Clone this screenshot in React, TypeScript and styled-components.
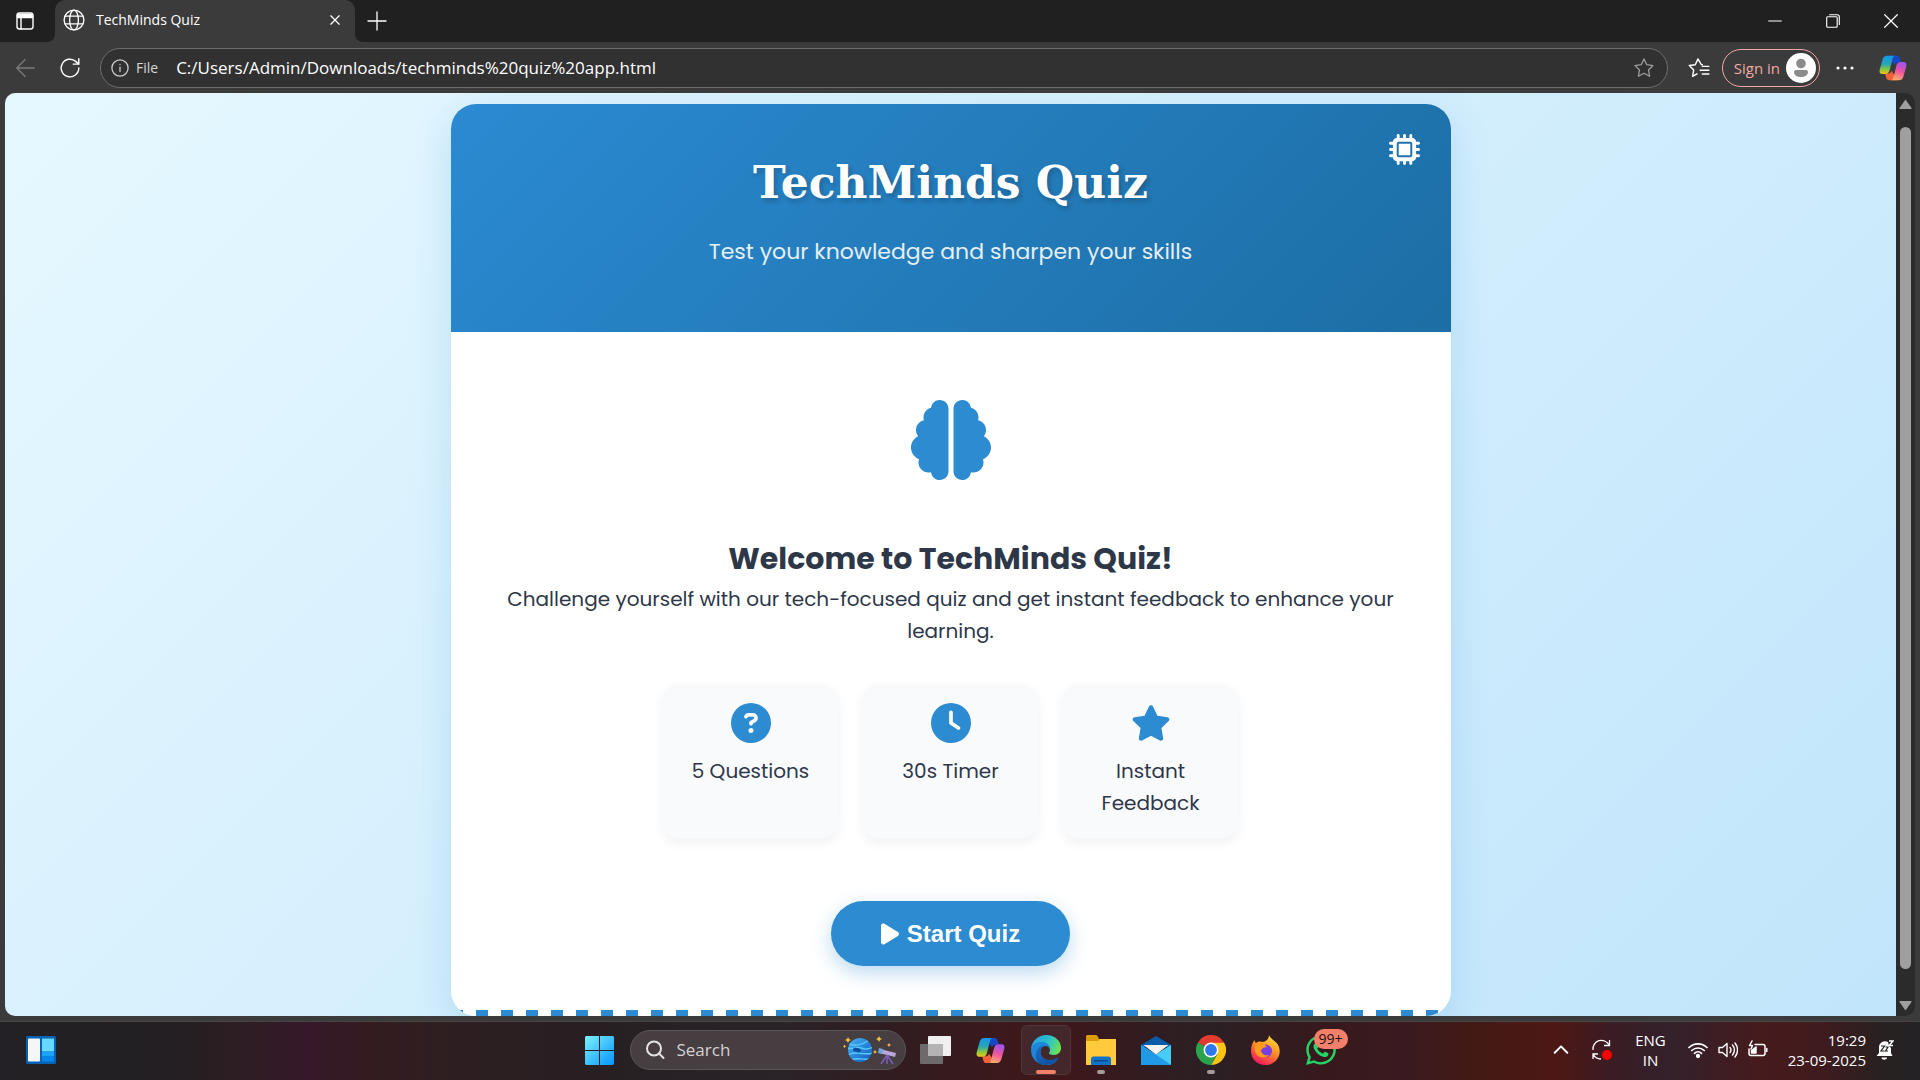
import React, { useState } from "react";
import styled, { createGlobalStyle } from "styled-components";
import {
  FaBrain,
  FaCircleQuestion,
  FaClock,
  FaMicrochip,
  FaPlay,
  FaStar,
  FaWhatsapp,
} from "react-icons/fa6";

const chromeFont = `"Segoe UI", "Open Sans", "Noto Sans", sans-serif`;
const bodyFont = `Poppins, Inter, "Open Sans", sans-serif`;
const slabFont = `"Roboto Slab", "DejaVu Serif", serif`;

const GlobalStyle = createGlobalStyle`
  *, *::before, *::after { box-sizing: border-box; }
  html, body, #root { height: 100%; }
  body { margin: 0; background: #3b3b3b; overflow: hidden; }
  button { border: 0; padding: 0; background: none; color: inherit; cursor: pointer; }
  input { border: 0; padding: 0; background: none; color: inherit; outline: none; min-width: 0; }
  h1, h2, p, ul { margin: 0; padding: 0; }
  svg { display: block; flex: none; }
`;

const Desktop = styled.div`
  display: flex;
  flex-direction: column;
  height: 100vh;
  font-family: ${chromeFont};
  color: #fff;
`;

/* ---------- browser frame ---------- */

const TabStrip = styled.header`
  display: flex;
  align-items: stretch;
  height: 42px;
  background: #202020;
`;

const StripStart = styled.div`
  display: flex;
  width: 55px;
  background: #3b3b3b;
`;

const SideButton = styled.button`
  display: grid;
  place-items: center;
  flex: 1;
  padding-right: 6px;
  background: #202020;
  border-radius: 0 0 8px 0;
`;

const Tab = styled.div`
  display: flex;
  align-items: center;
  gap: 11px;
  width: 300px;
  padding: 0 12px 2px 8px;
  background: #3b3b3b;
  border-radius: 10px 10px 0 0;
`;

const TabTitle = styled.span`
  flex: 1;
  font-size: 14px;
  line-height: 20px;
`;

const IconButton = styled.button<{ $w?: number }>`
  display: grid;
  place-items: center;
  width: ${(p) => p.$w ?? 16}px;
`;

const StripRest = styled.div`
  display: flex;
  flex: 1;
  background: #3b3b3b;
`;

const StripInner = styled.div`
  display: flex;
  flex: 1;
  justify-content: space-between;
  background: #202020;
  border-radius: 0 0 0 8px;
`;

const WindowControls = styled.div`
  display: flex;
`;

const Toolbar = styled.div`
  display: flex;
  align-items: center;
  height: 51px;
  padding: 0 4px 0 2px;
  background: #3b3b3b;
`;

const AddressBar = styled.form`
  display: flex;
  align-items: center;
  flex: 1;
  height: 40px;
  margin: 0 8px;
  padding: 0 12px 0 10px;
  border: 1px solid #6c6c6c;
  border-radius: 20px;
  background: #313131;
`;

const FileLabel = styled.label`
  margin: 0 18px 0 7px;
  font-size: 14px;
  line-height: 20px;
  color: #d6d6d6;
`;

const UrlInput = styled.input`
  flex: 1;
  font: 400 17px/24px ${chromeFont};
`;

const SignIn = styled.button`
  display: flex;
  align-items: center;
  gap: 6px;
  height: 38px;
  padding: 0 3px 0 11px;
  border: 1px solid #f0a9a6;
  border-radius: 20px;
  color: #f0a9a6;
  font: 400 15px/20px ${chromeFont};
`;

const Viewport = styled.div`
  display: flex;
  flex: 1;
  min-height: 0;
  padding: 0 5px 5px;
  background: #3b3b3b;
`;

const Page = styled.main`
  flex: 1;
  padding: 11px 20px 0;
  overflow: hidden;
  border-radius: 10px 0 0 10px;
  background: linear-gradient(135deg, #e6f8ff 0%, #c1e5fb 100%);
  font-family: ${bodyFont};
  color: #2d3748;
`;

const Scrollbar = styled.div`
  display: flex;
  flex-direction: column;
  align-items: center;
  gap: 18px;
  width: 19px;
  padding: 6px 0 5px;
  border-radius: 0 10px 10px 0;
  background: #2b2b2b;
  color: #9f9f9f;
`;

const Thumb = styled.div`
  flex: 1;
  width: 11px;
  margin-bottom: 14px;
  border-radius: 6px;
  background: #9f9f9f;
`;

/* ---------- quiz page ---------- */

const Card = styled.section`
  display: flex;
  flex-direction: column;
  max-width: 1000px;
  height: 100%;
  margin: 0 auto;
  overflow: hidden;
  border-radius: 25px;
  background: #fff;
  box-shadow: 0 12px 38px rgba(44, 139, 209, 0.2);
  text-align: center;
`;

const CardHeader = styled.div`
  position: relative;
  padding: 47px 40px 62px;
  background: linear-gradient(135deg, #2b8ad2 0%, #1c6ea4 100%);
  color: #fff;
`;

const ChipBadge = styled.span`
  position: absolute;
  top: 30px;
  right: 31px;
`;

const Title = styled.h1`
  font: 700 44px/64px ${slabFont};
  text-shadow: 2px 3px 5px rgba(0, 0, 0, 0.22);
`;

const Subtitle = styled.p`
  margin-top: 19px;
  font-size: 22px;
  line-height: 36px;
  color: #e4eff7;
`;

const CardBody = styled.div`
  display: flex;
  flex-direction: column;
  align-items: center;
  flex: 1;
  padding: 68px 50px 0;
`;

const BrainMark = styled.div`
  color: #2c8bd1;
`;

const Welcome = styled.h2`
  margin-top: 55px;
  font-size: 30px;
  line-height: 48px;
`;

const Lead = styled.p`
  font-size: 20px;
  line-height: 32px;
`;

const Features = styled.ul`
  display: flex;
  gap: 25px;
  margin-top: 37px;
  list-style: none;
`;

const Feature = styled.li`
  display: flex;
  flex-direction: column;
  align-items: center;
  gap: 12px;
  width: 175px;
  padding: 19px 20px;
  border-radius: 15px;
  background: #f9fafc;
  box-shadow: 0 5px 12px rgba(0, 0, 0, 0.06);
  font-size: 20px;
  line-height: 32px;
  svg { width: auto; height: 40px; color: #2c8bd1; }
`;

const StartButton = styled.button`
  display: flex;
  align-items: center;
  gap: 8px;
  height: 65px;
  margin-top: 63px;
  padding: 0 50px;
  border-radius: 50px;
  background: #2c8bd1;
  color: #fff;
  font: 700 24px/28px Arial, "Liberation Sans", sans-serif;
  box-shadow: 0 7px 20px rgba(44, 139, 209, 0.32);
  svg { width: 18px; height: 24px; }
`;

const Stripe = styled.div`
  height: 6px;
  background: repeating-linear-gradient(90deg, #2c8bd1 0 12px, #fff 12px 25px);
`;

/* ---------- taskbar ---------- */

const Taskbar = styled.footer`
  display: grid;
  grid-template-columns: 1fr auto 1fr;
  align-items: center;
  height: 59px;
  padding-bottom: 2px;
  border-top: 1px solid #4a4646;
  background: linear-gradient(
    90deg,
    #232125 0%, #231f22 9%, #2c1e22 12%, #35182a 16%, #341b20 19%, #2e1f21 23%,
    #271f22 31%, #2a2328 41%, #321c20 47%, #40171a 55%, #351a1e 58%, #2b2024 63%,
    #37191c 69%, #3a1a20 73%, #431a14 77%, #4d1714 81%, #3a1c24 84%, #33212b 87%,
    #471a1c 92%, #3e1b1e 95%, #282121 98%, #242225 100%
  );
`;

const Widgets = styled.div`
  padding-left: 26px;
`;

const Apps = styled.nav`
  display: flex;
  align-items: center;
  gap: 5px;
`;

const AppButton = styled.button<{ $active?: boolean }>`
  position: relative;
  display: grid;
  place-items: center;
  width: 50px;
  height: 50px;
  border-radius: 6px;
  border: 1px solid ${(p) => (p.$active ? "#533539" : "transparent")};
  background: ${(p) => (p.$active ? "#44272a" : "transparent")};
`;

const RunMark = styled.span<{ $wide?: boolean }>`
  position: absolute;
  bottom: 0;
  left: 50%;
  width: ${(p) => (p.$wide ? 20 : 8)}px;
  height: 4px;
  transform: translateX(-50%);
  border-radius: 2px;
  background: ${(p) => (p.$wide ? "#f5806a" : "#a39a9b")};
`;

const CountBadge = styled.span`
  position: absolute;
  top: 3px;
  left: 17px;
  padding: 0 5px;
  border-radius: 10px;
  background: #f5806a;
  color: #1b1012;
  font: 400 14px/20px ${chromeFont};
`;

const SearchBox = styled.label`
  display: flex;
  align-items: center;
  gap: 12px;
  width: 276px;
  height: 40px;
  padding: 0 8px 0 14px;
  border: 1px solid #5c5456;
  border-radius: 20px;
  background: #463e41;
`;

const SearchInput = styled.input`
  flex: 1;
  font: 400 17px/24px ${chromeFont};
  color: #d5d1d2;
  &::placeholder { color: #d5d1d2; opacity: 1; }
`;

const Tray = styled.div`
  display: flex;
  justify-content: flex-end;
  align-items: center;
  padding-right: 26px;
`;

const TrayGroup = styled.div<{ $gap: number; $mr: number }>`
  display: flex;
  align-items: center;
  gap: ${(p) => p.$gap}px;
  margin-right: ${(p) => p.$mr}px;
`;

const TrayText = styled.div<{ $align: "center" | "right"; $mr: number }>`
  margin-right: ${(p) => p.$mr}px;
  font-size: 15px;
  line-height: 20px;
  text-align: ${(p) => p.$align};
`;

/* ---------- icons ---------- */

const Line = ({ size = 20, w = 1.4, children, color = "currentColor" }: any) => (
  <svg width={size} height={size} viewBox="0 0 20 20" fill="none" stroke={color} strokeWidth={w} strokeLinecap="round" strokeLinejoin="round" aria-hidden>
    {children}
  </svg>
);

const STAR = "M10 1.8l2.5 5.2 5.7.8-4.1 4 1 5.7-5.1-2.7-5.1 2.7 1-5.7-4.1-4 5.7-.8z";

const CopilotIcon = ({ id, size }: { id: string; size: number }) => (
  <svg width={size} height={size} viewBox="0 0 30 30" aria-hidden>
    <defs>
      <linearGradient id={id + "a"} x1="0" y1="0" x2="0" y2="1">
        <stop offset="0" stopColor="#1597e8" />
        <stop offset=".45" stopColor="#25a6b8" />
        <stop offset=".75" stopColor="#8cc63f" />
        <stop offset="1" stopColor="#f6c515" />
      </linearGradient>
      <linearGradient id={id + "b"} x1=".6" y1="0" x2=".3" y2="1">
        <stop offset="0" stopColor="#a153ee" />
        <stop offset=".5" stopColor="#f0569a" />
        <stop offset="1" stopColor="#ffb06a" />
      </linearGradient>
    </defs>
    <path d="M10 2h9c2 0 3 1 3.500 3l1 4h-3c-2 0-3.500 1-4 3L14 8z" fill="#1747c8" />
    <path d="M20 28h-9c-2 0-3-1-3.500-3l-1-4h3c2 0 3.500-1 4-3l2.500 4z" fill="#f4603a" />
    <path d="M8.500 2h9c-1.500 0-2.500 1-3 3L11.500 17c-.8 3-2 4.500-5 4.500H4c-3 0-4-2-3.200-5L3.800 6C4.500 3.500 6 2 8.500 2z" fill={`url(#${id}a)`} />
    <path d="M21.500 28h-9c1.500 0 2.500-1 3-3l3-12c.8-3 2-4.500 5-4.500H26c3 0 4 2 3.200 5l-3 10.500c-.7 2.500-2.200 4-4.700 4z" fill={`url(#${id}b)`} />
  </svg>
);

const WidgetsIcon = () => (
  <svg width="30" height="28" viewBox="0 0 30 28" aria-hidden>
    <rect width="30" height="28" rx="1.5" fill="#0862b4" />
    <rect x="2" y="2.5" width="12" height="23" rx="1" fill="#f6f6f6" />
    <rect x="16" y="2.5" width="12" height="13" fill="#67d8ff" />
    <rect x="16" y="15.5" width="12" height="5" fill="#1ba4fb" />
    <rect x="16" y="20.5" width="12" height="5" fill="#0586ee" />
  </svg>
);

const WindowsIcon = () => (
  <svg width="29" height="29" viewBox="0 0 29 29" aria-hidden>
    <defs>
      <linearGradient id="win" gradientUnits="userSpaceOnUse" x1="0" y1="0" x2="29" y2="29">
        <stop offset="0" stopColor="#7df1ff" />
        <stop offset="1" stopColor="#0693fd" />
      </linearGradient>
    </defs>
    <path d="M1 0h13v14H0V1zM15 0h13l1 1v13H15zM0 15h14v14H1l-1-1zM15 15h14v13l-1 1H15z" fill="url(#win)" />
  </svg>
);

const PlanetIcon = () => (
  <svg width="54" height="30" viewBox="0 0 54 30" aria-hidden>
    <defs>
      <linearGradient id="planet" x1="0" y1="0" x2="1" y2="1">
        <stop offset="0" stopColor="#46b4f5" />
        <stop offset="1" stopColor="#0a5bbd" />
      </linearGradient>
      <clipPath id="disc"><circle cx="17" cy="15" r="12" /></clipPath>
    </defs>
    <circle cx="17" cy="15" r="12" fill="url(#planet)" />
    <g clipPath="url(#disc)" fill="none" stroke="#5fc6ff" strokeWidth="1.4">
      <path d="M4 8c7 4 15 2 22-3M4 13c7 2 9-2 14 0s7 1 12-1M5 20c7-5 13 1 25-2M8 25c6-3 10 0 18-1" />
    </g>
    <ellipse cx="14" cy="15" rx="4" ry="2" fill="#0b4f9f" transform="rotate(12 14 15)" />
    <path d="M5 2l1 2 2 1-2 1-1 2-1-2-2-1 2-1zM36 1l1 2 2 1-2 1-1 2-1-2-2-1 2-1zM46 8l.7 1.300 1.300.7-1.300.7L46 12l-.7-1.300L44 10l1.300-.7zM32 15l.7 1.300 1.300.7-1.300.7L32 19l-.7-1.300L30 17l1.300-.7zM1.500 9.500l.6 1.200 1.200.6-1.200.6-.6 1.200-.6-1.200L0 11.300l.9-.6z" fill="#f5c04a" />
    <path d="M37 14l16 4-1 4-16-4z" fill="#b9a7d8" />
    <path d="M36 13l4 1-1 5-4-1z" fill="#6fa5d9" />
    <path d="M44 20v9M44 20l-6 9M44 20l6 9" stroke="#7d5cc0" strokeWidth="1.5" />
  </svg>
);

const TaskViewIcon = () => (
  <svg width="31" height="30" viewBox="0 0 31 30" aria-hidden>
    <rect x="8" y="1" width="23" height="20" rx="1" fill="#efefef" />
    <rect x="0" y="9" width="23" height="20" rx="1" fill="#6c6a6a" />
    <rect x="8" y="9" width="15" height="12" fill="#b5b3b3" />
  </svg>
);

const EdgeIcon = () => (
  <svg width="30" height="30" viewBox="0 0 30 30" aria-hidden>
    <defs>
      <linearGradient id="edgeA" x1="0" y1=".3" x2="1" y2=".6">
        <stop offset="0" stopColor="#279fe8" />
        <stop offset=".55" stopColor="#2bc3c6" />
        <stop offset="1" stopColor="#6fe352" />
      </linearGradient>
      <linearGradient id="edgeB" x1="0" y1="0" x2=".6" y2="1">
        <stop offset="0" stopColor="#1b6fc0" />
        <stop offset="1" stopColor="#0f4fa3" />
      </linearGradient>
    </defs>
    <path d="M0 14C1 5 8 0 15 0c9 0 15 6 15 13 0 4-3 7-7 7-3 0-5-1-5-2 0-.8 1-1 1-3 0-3-3-5.500-7-5.500S2 11 0 14z" fill="url(#edgeA)" />
    <path d="M0 15c0-5 5-8 11-8 4.500 0 8 3 8 6.500-1-1.500-2.500-2.500-4.500-2.500-3 0-5 3-5 6 0 5 5 9 10 9 3 0 5-1 7-2-2 4-6 6-11.500 6C6 30 0 23 0 15z" fill="#1e86d8" />
    <path d="M9 29c-4-3-5-7-4-11 .8-4 4-7 8-7.500C10.500 12 9.500 14.500 9.500 17c0 5 4.500 8 9 8 3 0 5-.8 7.500-2.200.8-.4 1.400.3.900 1C24.500 28 20 30 15 30c-2 0-4-.4-6-1z" fill="url(#edgeB)" />
  </svg>
);

const FolderIcon = () => (
  <svg width="30" height="31" viewBox="0 0 30 31" aria-hidden>
    <path d="M0 1.500C0 .7.700 0 1.500 0h8c1 0 1.500.3 2 1l1.500 3H30v8H0z" fill="#dc9c0a" />
    <path d="M0 6h12l2-2h15c.6 0 1 .4 1 1v25H1c-.6 0-1-.4-1-1z" fill="#ffcb3c" />
    <path d="M5 30v-6c0-1.500 1-2.500 2.500-2.500h15c1.500 0 2.500 1 2.500 2.500v6z" fill="#0f74c8" />
    <rect x="8" y="25" width="14" height="1.5" fill="#0a4a8c" />
  </svg>
);

const MailIcon = () => (
  <svg width="30" height="30" viewBox="0 0 30 30" aria-hidden>
    <path d="M0 10L15 1l15 9v2H0z" fill="#0a5cab" />
    <path d="M0 10l15 9.500L30 10v20H0z" fill="#2aa8ee" />
    <path d="M30 10v20L15 19.500z" fill="#48cdfa" />
    <path d="M0 30V10l30 20z" fill="#1f9ae6" />
    <path d="M2.500 10h25L15 19.500z" fill="#f3f3f3" />
  </svg>
);

const ChromeIcon = () => (
  <svg width="30" height="30" viewBox="0 0 30 30" aria-hidden>
    <path d="M15 15L2 7.500A15 15 0 0 1 28 7.500z" fill="#e33b2e" />
    <path d="M15 7.500h13A15 15 0 0 1 15 30l6.500-11z" fill="#fdc313" />
    <path d="M2 7.500A15 15 0 0 0 15 30l6.500-11.200L15 15z" fill="#2ba24c" />
    <path d="M15 7.500h13L24 5H10z" fill="#e33b2e" />
    <circle cx="15" cy="15" r="7.5" fill="#fff" />
    <circle cx="15" cy="15" r="5.9" fill="#3078f0" />
  </svg>
);

const FirefoxIcon = () => (
  <svg width="29" height="30" viewBox="0 0 29 30" aria-hidden>
    <defs>
      <linearGradient id="fox" x1=".8" y1="0" x2=".3" y2="1">
        <stop offset="0" stopColor="#ffe83e" />
        <stop offset=".45" stopColor="#ff9324" />
        <stop offset="1" stopColor="#f0155f" />
      </linearGradient>
    </defs>
    <path d="M18 0c1 4 8 6 10 12 3 9-4 18-13.500 18C6 30 0 24 0 16c0-5 1.500-8 3.500-11 .3 1.500.7 2.200 1.500 3 2-1.500 4-1.800 6-1C15 7 18 4 18 0z" fill="url(#fox)" />
    <circle cx="14.5" cy="16" r="6.5" fill="#7a3fe0" />
    <path d="M4 9c3-2 7-2 9 0l3 3c-3 0-4 1-6 3 0 4 4 6 8 5-4 5-14 2-14-5z" fill="#ff9a1f" />
  </svg>
);

const taskbarApps = [
  { name: "Task view", icon: <TaskViewIcon /> },
  { name: "Copilot", icon: <CopilotIcon id="tb" size={29} /> },
  { name: "Microsoft Edge", icon: <EdgeIcon />, active: true },
  { name: "File Explorer", icon: <FolderIcon />, running: true },
  { name: "Mail", icon: <MailIcon /> },
  { name: "Google Chrome", icon: <ChromeIcon />, running: true },
  { name: "Firefox", icon: <FirefoxIcon /> },
  { name: "WhatsApp", icon: <FaWhatsapp size={34} color="#25d366" />, badge: "99+" },
];

const features = [
  { icon: <FaCircleQuestion />, label: "5 Questions" },
  { icon: <FaClock />, label: "30s Timer" },
  { icon: <FaStar />, label: "Instant Feedback" },
];

function BrowserFrame() {
  const [url, setUrl] = useState("C:/Users/Admin/Downloads/techminds%20quiz%20app.html");
  return (
    <>
      <TabStrip>
        <StripStart>
          <SideButton aria-label="Tab actions">
            <Line size={20}>
              <rect x="2" y="2" width="16" height="16" rx="2.5" />
              <path d="M2.500 3.500h15v3h-15z" fill="#fff" />
              <path d="M6 7v11" />
            </Line>
          </SideButton>
        </StripStart>
        <Tab>
          <Line size={22} w={1.2}>
            <circle cx="10" cy="10" r="9" />
            <ellipse cx="10" cy="10" rx="4" ry="9" />
            <path d="M2 6.500h16M2 13.500h16" />
          </Line>
          <TabTitle>TechMinds Quiz</TabTitle>
          <IconButton aria-label="Close tab">
            <Line size={14} w={1.8}><path d="M4 4l12 12M16 4L4 16" /></Line>
          </IconButton>
        </Tab>
        <StripRest>
          <StripInner>
            <IconButton $w={44} aria-label="New tab">
              <Line size={20} w={1.3}><path d="M10 1v18M1 10h18" /></Line>
            </IconButton>
            <WindowControls>
              <IconButton $w={58} aria-label="Minimize">
                <Line size={14} w={1.6}><path d="M1 10h18" /></Line>
              </IconButton>
              <IconButton $w={58} aria-label="Restore">
                <Line size={14} w={1.6}>
                  <rect x="1" y="4" width="15" height="15" rx="1.5" />
                  <path d="M5 1h11a3 3 0 0 1 3 3v11" />
                </Line>
              </IconButton>
              <IconButton $w={58} aria-label="Close window">
                <Line size={14} w={1.8}><path d="M1 1l18 18M19 1L1 19" /></Line>
              </IconButton>
            </WindowControls>
          </StripInner>
        </StripRest>
      </TabStrip>
      <Toolbar>
        <IconButton $w={45} aria-label="Back">
          <Line size={22} color="#7b7b7b" w={1.2}><path d="M18.500 10H2.500M10 2.500L2.500 10l7.500 7.500" /></Line>
        </IconButton>
        <IconButton $w={45} aria-label="Refresh">
          <Line size={22} w={1.3}>
            <path d="M18 10a8 8 0 1 1-2.500-5.800L18 6.500M18 1.500v5h-5" />
          </Line>
        </IconButton>
        <AddressBar onSubmit={(e) => e.preventDefault()}>
          <Line size={18} w={1.4} color="#cfcfcf">
            <circle cx="10" cy="10" r="9" />
            <path d="M10 9v5M10 6v.2" />
          </Line>
          <FileLabel htmlFor="url">File</FileLabel>
          <UrlInput id="url" value={url} spellCheck={false} onChange={(e) => setUrl(e.target.value)} />
          <IconButton type="button" $w={22} aria-label="Add to favorites">
            <Line size={22} w={1.2} color="#9c9c9c"><path d={STAR} /></Line>
          </IconButton>
        </AddressBar>
        <IconButton $w={46} aria-label="Favorites">
          <Line size={22} w={1.3}>
            <path d="M13 7l-1-.2L9 1.800 6.600 7l-5.400.8 4 4-1 5.700 4-2.200M13 8.500h6M11 12h8M13 15.500h6" />
          </Line>
        </IconButton>
        <SignIn>
          Sign in
          <svg width="30" height="30" viewBox="0 0 30 30" aria-hidden>
            <circle cx="15" cy="15" r="15" fill="#fff" />
            <circle cx="15" cy="10.500" r="4.800" fill="#8b8b8b" />
            <path d="M8 19c0-1 .8-2 2-2h10c1.200 0 2 1 2 2 0 3-3 5-7 5s-7-2-7-5z" fill="#8b8b8b" />
          </svg>
        </SignIn>
        <IconButton $w={50} aria-label="Settings and more">
          <svg width="18" height="4" viewBox="0 0 18 4" fill="#fff" aria-hidden>
            <circle cx="2" cy="2" r="1.6" /><circle cx="9" cy="2" r="1.6" /><circle cx="16" cy="2" r="1.6" />
          </svg>
        </IconButton>
        <IconButton $w={46} aria-label="Copilot">
          <CopilotIcon id="tool" size={28} />
        </IconButton>
      </Toolbar>
    </>
  );
}

function QuizPage() {
  return (
    <Page>
      <Card>
        <CardHeader>
          <ChipBadge><FaMicrochip size={31} /></ChipBadge>
          <Title>TechMinds Quiz</Title>
          <Subtitle>Test your knowledge and sharpen your skills</Subtitle>
        </CardHeader>
        <CardBody>
          <BrainMark><FaBrain size={80} /></BrainMark>
          <Welcome>Welcome to TechMinds Quiz!</Welcome>
          <Lead>
            Challenge yourself with our tech-focused quiz and get instant feedback to enhance your learning.
          </Lead>
          <Features>
            {features.map((f) => (
              <Feature key={f.label}>
                {f.icon}
                {f.label}
              </Feature>
            ))}
          </Features>
          <StartButton>
            <FaPlay />
            Start Quiz
          </StartButton>
        </CardBody>
        <Stripe />
      </Card>
    </Page>
  );
}

function SystemTray() {
  return (
    <Tray>
      <TrayGroup $gap={21} $mr={22}>
        <IconButton $w={18} aria-label="Show hidden icons">
          <Line size={18} w={2.2}><path d="M3 13l7-7 7 7" /></Line>
        </IconButton>
        <svg width="22" height="24" viewBox="0 0 22 24" fill="none" stroke="#fff" strokeWidth="1.3" aria-hidden>
          <path d="M2 12a8.500 8.500 0 0 1 16-5M18.500 2v5.500H13M2 21v-5h5M2 16c2 4 5 5 8 5" />
          <circle cx="16" cy="17" r="5" fill="#f00" stroke="none" />
        </svg>
      </TrayGroup>
      <TrayText $align="center" $mr={22}>ENG<br />IN</TrayText>
      <TrayGroup $gap={10} $mr={20}>
        <Line size={20} w={1.7}>
          <path d="M1 7.500a13 13 0 0 1 18 0M3.800 10.500a9 9 0 0 1 12.400 0M6.500 13.300a5 5 0 0 1 7 0" />
          <circle cx="10" cy="16" r="1.3" fill="#fff" />
        </Line>
        <Line size={20} w={1.4}>
          <path d="M1 7.500h3.500L9 3.500v13l-4.500-4H1zM12 7.500a4 4 0 0 1 0 5M14.500 5a7.500 7.500 0 0 1 0 10M17 3a11 11 0 0 1 0 14" />
        </Line>
        <Line size={20} w={1.5}>
          <path d="M7 4.500h8a2 2 0 0 1 2 2v7a2 2 0 0 1-2 2H3a2 2 0 0 1-2-2V9M18.800 8.500v3" />
          <path d="M3.500 13v-2.500L8 7v6z" fill="#fff" />
          <path d="M4 1L1.500 5.500h3L3 9" />
        </Line>
      </TrayGroup>
      <TrayText $align="right" $mr={10}>19:29<br />23-09-2025</TrayText>
      <IconButton $w={18} aria-label="Notifications">
        <svg width="18" height="22" viewBox="0 0 18 22" aria-hidden>
          <path d="M3 14V8a6 6 0 0 1 9-5l1 4 2 2v5l1.500 3H.5z" fill="#fff" />
          <path d="M5.500 18.500h5.500c0 3-5.500 3-5.500 0z" fill="#fff" />
          <path d="M5 7h3.500L5 12h3.500M9.500 8H12l-2.500 4H12" stroke="#222" fill="none" strokeWidth="1.2" />
          <path d="M13 2h4l-4 4.500h4" stroke="#fff" fill="none" strokeWidth="1.4" />
        </svg>
      </IconButton>
    </Tray>
  );
}

export default function App() {
  return (
    <Desktop>
      <GlobalStyle />
      <BrowserFrame />
      <Viewport>
        <QuizPage />
        <Scrollbar>
          <svg width="13" height="10" viewBox="0 0 13 10" fill="currentColor" aria-hidden>
            <path d="M6.500.5L12.500 9a.7.700 0 0 1-.5 1H1a.7.700 0 0 1-.5-1z" />
          </svg>
          <Thumb />
          <svg width="13" height="10" viewBox="0 0 13 10" fill="currentColor" aria-hidden>
            <path d="M6.500 9.500L.5 1A.7.700 0 0 1 1 0h11a.7.700 0 0 1 .5 1z" />
          </svg>
        </Scrollbar>
      </Viewport>
      <Taskbar>
        <Widgets>
          <IconButton $w={30} aria-label="Widgets"><WidgetsIcon /></IconButton>
        </Widgets>
        <Apps>
          <AppButton aria-label="Start"><WindowsIcon /></AppButton>
          <SearchBox>
            <Line size={20} w={2} color="#e6e3e4">
              <circle cx="9" cy="8.500" r="7" />
              <path d="M14 13.500l4.500 4.500" />
            </Line>
            <SearchInput type="text" placeholder="Search" aria-label="Search" />
            <PlanetIcon />
          </SearchBox>
          {taskbarApps.map((a) => (
            <AppButton key={a.name} aria-label={a.name} $active={a.active}>
              {a.icon}
              {(a.active || a.running) && <RunMark $wide={a.active} />}
              {a.badge && <CountBadge>{a.badge}</CountBadge>}
            </AppButton>
          ))}
        </Apps>
        <SystemTray />
      </Taskbar>
    </Desktop>
  );
}
